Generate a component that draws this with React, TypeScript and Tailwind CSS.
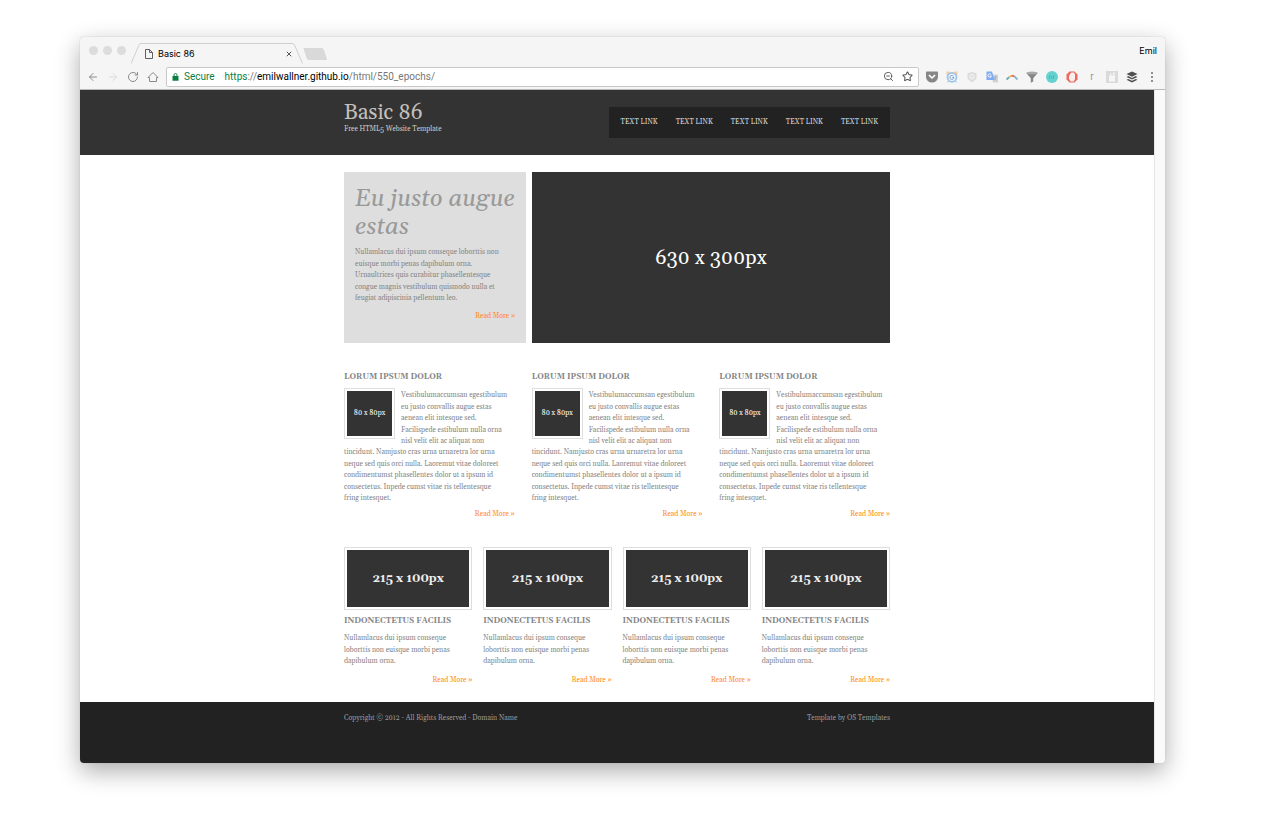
import React from "react";
import { ArrowLeft, ArrowRight, RotateCw, X, Star, ZoomOut } from "lucide-react";

const serif = "font-['Georgia','Gelasio','Liberation_Serif',serif]";

function Lines({ lines, className = "" }: { lines: string[]; className?: string }) {
  return (
    <p className={`flex flex-col justify-between ${className}`}>
      {lines.map((line) => (
        <span key={line} className="whitespace-nowrap leading-[11px]">{line}</span>
      ))}
    </p>
  );
}

function ReadMore() {
  return (
    <a href="#more" className="block text-right leading-[12px] text-[#ff8a14]">Read More »</a>
  );
}

const sideLines = [
  "Vestibulumaccumsan egestibulum",
  "eu justo convallis augue estas",
  "aenean elit intesque sed.",
  "Facilispede estibulum nulla orna",
  "nisl velit elit ac aliquat non",
];
const restLines = [
  "tincidunt. Namjusto cras urna urnaretra lor urna",
  "neque sed quis orci nulla. Laoremut vitae doloreet",
  "condimentumst phasellentes dolor ut a ipsum id",
  "consectetus. Inpede cumst vitae ris tellentesque",
  "fring intesquet.",
];

function Extensions() {
  return (
    <div className="flex items-center gap-2">
      <svg className="size-3" viewBox="0 0 12 12" aria-hidden="true">
        <path d="M1 .5h10a1 1 0 0 1 1 1V6a6 5.500 0 0 1-12 0V1.500a1 1 0 0 1 1-1z" fill="#868686" />
        <path d="M3.300 4.400 6 7l2.700-2.600" fill="none" stroke="#fff" strokeWidth="1.500" strokeLinecap="round" strokeLinejoin="round" />
      </svg>
      <svg className="size-3" viewBox="0 0 12 12" aria-hidden="true">
        <circle cx="2.300" cy="2.200" r="2" fill="#f7cf9c" />
        <circle cx="9.700" cy="2.200" r="2" fill="#f7cf9c" />
        <path d="M2.500 9.500 1.500 11.500M9.500 9.500l1 2" stroke="#9fc3ea" />
        <circle cx="6" cy="6.300" r="4.500" fill="#eef5fd" stroke="#9fc3ea" strokeWidth="1.800" />
        <path d="M7.500 5.200A2 2 0 1 0 7.900 6.500H6.300" fill="none" stroke="#7f9fc8" />
      </svg>
      <svg className="size-3" viewBox="0 0 12 12" aria-hidden="true">
        <path d="M6 1 10.500 2.300V6c0 2.500-2 4-4.500 5.300C3.500 10 1.500 8.500 1.500 6V2.300z" fill="#dcdcdc" />
        <circle cx="6" cy="5.700" r="2.300" fill="none" stroke="#f5f5f5" />
        <circle cx="6" cy="5.700" r=".8" fill="#f5f5f5" />
      </svg>
      <svg className="size-3" viewBox="0 0 12 12" aria-hidden="true">
        <path d="M5 3.500h7v8H7z" fill="#d5d5d5" />
        <path d="M7.500 6h3.500M9.200 5v1M10.500 6 8 9.500M8.300 7.500l2.200 2" stroke="#8aa7c9" strokeWidth=".7" fill="none" />
        <path d="M.5.500H6l2.500 8.500h-8z" fill="#7fadf3" />
        <path d="M5.200 3.700A1.700 1.700 0 1 0 5.400 5H4" fill="none" stroke="#fff" strokeWidth=".9" />
      </svg>
      <svg className="size-3" viewBox="0 0 12 12" aria-hidden="true" fill="none" strokeWidth="1.800">
        <path d="M.5 8.500 3 6.300" stroke="#6aa9b7" />
        <path d="M3 6.300 5.500 4.700" stroke="#eeb25e" />
        <path d="M5.500 4.700 8.500 5.400" stroke="#e0664f" />
        <path d="M8.500 5.400 11.500 8.500" stroke="#7fb5cc" />
      </svg>
      <svg className="size-3" viewBox="0 0 12 12" aria-hidden="true">
        <path d="M.3 2 4.800 7.300V11.700L7.200 10.500V7.300L11.700 2z" fill="#858585" />
        <ellipse cx="6" cy="2" rx="5.700" ry="1.500" fill="#a9a9a9" />
      </svg>
      <svg className="size-3" viewBox="0 0 12 12" aria-hidden="true">
        <circle cx="6" cy="6" r="6" fill="#64d2cf" />
        <path d="M3.500 8V4.500M3.500 5.500c1-1.200 2.300-1 2.300.3V8M7.500 8V4.500M7.500 5.300c.4-.7 1-.8 1.500-.6" fill="none" stroke="#45b3b2" strokeWidth=".8" />
      </svg>
      <svg className="size-3" viewBox="0 0 12 12" aria-hidden="true">
        <path d="M3.500.5h5L11.500 3.500v5l-3 3h-5l-3-3v-5z" fill="#ee6a5c" />
        <path d="M3 5.500 4 3l1.500-1.500H8l1 2v4.500L7.700 10.500h-3L3 8z" fill="#fbeeee" />
      </svg>
      <span className="w-3 text-center font-['Roboto',sans-serif] text-[10px] leading-3 text-[#999]">r</span>
      <svg className="size-3" viewBox="0 0 12 12" aria-hidden="true">
        <path d="M0 0h12v12H0z" fill="#dadada" />
        <path d="M3 5h6v5.500H3zM4 2.500h1.500V5H4zM7 1.500h1.500V5H7z" fill="#f5f5f5" />
      </svg>
      <svg className="size-3" viewBox="0 0 12 12" aria-hidden="true" fill="#505050">
        <path d="M6 .5 11.500 3.100 6 5.700.5 3.100z" />
        <path d="M.5 6 2.300 5.100 6 6.900l3.700-1.800 1.800.9L6 8.600z" />
        <path d="M.5 8.800 2.300 7.900 6 9.700l3.700-1.800 1.800.9L6 11.400z" />
      </svg>
      <svg className="size-3" viewBox="0 0 12 12" aria-hidden="true" fill="#777">
        <circle cx="6" cy="2" r="1.100" /><circle cx="6" cy="6" r="1.100" /><circle cx="6" cy="10" r="1.100" />
      </svg>
    </div>
  );
}

function BrowserBar() {
  return (
    <div className="border-b border-[#b9b7b9] bg-[#f5f5f5] font-['Inter',sans-serif]">
      <div className="flex h-[27px] items-end">
        <div className="flex items-center gap-[5px] self-center pl-[9px]">
          <span className="size-[9px] rounded-full bg-[#dcdcdc]" />
          <span className="size-[9px] rounded-full bg-[#dcdcdc]" />
          <span className="size-[9px] rounded-full bg-[#dcdcdc]" />
        </div>
        <div className="relative ml-[5px] flex h-[21px] w-[172px] items-center">
          <svg className="absolute inset-0 size-full" viewBox="0 0 172 21" preserveAspectRatio="none" aria-hidden="true">
            <path d="M0 20.500 8 2Q8.500.5 10 .5H161Q163 .5 163.500 2L171.500 20.500" fill="none" stroke="#cfcfcf" />
          </svg>
          <svg className="ml-[14px] h-[10px] w-2" viewBox="0 0 8 10" fill="none" stroke="#5f5f5f" aria-hidden="true">
            <path d="M.5.5H4.500L7.500 3.500V9.500H.5zM4.500.5V3.500H7.500" />
          </svg>
          <span className="ml-[5px] flex-1 text-[9px] leading-3 text-black">Basic 86</span>
          <button aria-label="Close tab" className="mr-[10px]"><X className="size-2 text-[#555]" strokeWidth={3} /></button>
        </div>
        <svg className="mb-1 h-3 w-6" viewBox="0 0 24 12" aria-hidden="true">
          <path d="M1 .5h17.500Q20 .5 20.500 2l3 9.500H6Q4.500 11.500 4 10z" fill="#d9d9d9" stroke="#cfcfcf" strokeWidth=".6" />
        </svg>
        <span className="ml-auto self-center pr-2 text-[9px] leading-3 text-black">Emil</span>
      </div>
      <div className="flex h-[25px] items-center pr-[7px] pl-[7px]">
        <div className="flex items-center gap-2 text-[#8a8a8a]">
          <button aria-label="Back"><ArrowLeft className="size-3" strokeWidth={2} /></button>
          <button aria-label="Forward" className="text-[#dadada]"><ArrowRight className="size-3" strokeWidth={2} /></button>
          <button aria-label="Reload"><RotateCw className="size-3" strokeWidth={2} /></button>
          <button aria-label="Home">
            <svg className="block size-3" viewBox="0 0 12 12" fill="none" stroke="currentColor" aria-hidden="true">
              <path d="M1 6.500 6 1.500l5 5H9.500v4h-7v-4z" strokeLinejoin="round" />
            </svg>
          </button>
        </div>
        <div className="ml-[7px] flex h-5 min-w-0 flex-1 items-center rounded-[2px] border border-[#c8c8c8] bg-white px-[5px] font-['Roboto',sans-serif] text-[10px] leading-3 text-[#0b8043]">
          <svg className="h-2 w-[7px]" viewBox="0 0 7 8" aria-hidden="true">
            <path d="M.5 3h6v4.800h-6z" fill="currentColor" />
            <path d="M2 3.200V2a1.500 1.500 0 0 1 3 0V3.200" fill="none" stroke="currentColor" strokeWidth=".9" />
          </svg>
          <span className="ml-[5px]">Secure</span>
          <span className="ml-[10px] flex-1 text-[#777]"><span className="text-[#0b8043]">https</span>://<span className="text-black">emilwallner.github.io</span>/html/550_epochs/</span>
          <ZoomOut className="size-[11px] text-[#555]" strokeWidth={2} />
          <Star className="ml-2 size-[11px] text-[#555]" strokeWidth={2.200} />
        </div>
        <div className="ml-[7px]"><Extensions /></div>
      </div>
    </div>
  );
}

export default function App() {
  return (
    <div className="bg-white pt-[37px] pr-[104px] pb-[52px] pl-20">
      <div className="overflow-hidden rounded-[4px] shadow-[0_0_1px_#999,0_8px_24px_#00000055]">
        <BrowserBar />
        <div className="flex">
          <div className={`min-w-0 flex-1 bg-white text-[7px] text-[#858585] ${serif}`}>
            <header className="bg-[#333]">
              <div className="mx-auto flex h-[65px] max-w-[546px] items-center justify-between">
                <div className="pb-[10px]">
                  <h1 className="text-[21px] leading-[22px] text-[#c3bfba]">Basic 86</h1>
                  <p className="leading-[10px] text-[#d0ccc8]">Free HTML5 Website Template</p>
                </div>
                <nav className="flex h-[31px] items-center gap-[18px] bg-[#222] px-3 text-[#d8d8d8]">
                  {[1, 2, 3, 4, 5].map((n) => (
                    <a key={n} href={`#link-${n}`}>TEXT LINK</a>
                  ))}
                </nav>
              </div>
            </header>
            <main className="mx-auto max-w-[546px] pt-[17px] pb-4">
              <section className="flex gap-[6px]">
                <div className="h-[171px] w-[182px] bg-[#dedede] px-[11px] pt-[13px]">
                  <h2 className="text-[24px] leading-[28px] whitespace-nowrap text-[#999] italic">Eu justo augue<br />estas</h2>
                  <Lines className="mt-[6px] h-[57px]" lines={[
                    "Nullamlacus dui ipsum conseque loborttis non",
                    "euisque morbi penas dapibulum orna.",
                    "Urnaultrices quis curabitur phasellentesque",
                    "congue magnis vestibulum quismodo nulla et",
                    "feugiat adipiscinia pellentum leo.",
                  ]} />
                  <div className="mt-[6px]"><ReadMore /></div>
                </div>
                <div className="flex flex-1 items-center justify-center bg-[#333] text-[20px] text-white">630 x 300px</div>
              </section>
              <section className="mt-7 grid grid-cols-3 gap-[17px]">
                {[1, 2, 3].map((n) => (
                  <article key={n}>
                    <h2 className="text-[8px] leading-[12px] font-bold">LORUM IPSUM DOLOR</h2>
                    <div className="mt-[5px] flex gap-[6px]">
                      <div className="size-[51px] shrink-0 border border-[#dedede] p-[2px]">
                        <div className="flex size-full items-center justify-center bg-[#333] text-white">80 x 80px</div>
                      </div>
                      <Lines className="mt-[2px] h-[57px]" lines={sideLines} />
                    </div>
                    <Lines className="h-[57px]" lines={restLines} />
                    <div className="mt-1"><ReadMore /></div>
                  </article>
                ))}
              </section>
              <section className="mt-[27px] grid grid-cols-4 gap-[11px]">
                {[1, 2, 3, 4].map((n) => (
                  <article key={n}>
                    <div className="h-[63px] border border-[#dedede] p-[2px]">
                      <div className="flex size-full items-center justify-center bg-[#333] text-[12px] font-bold text-[#eee]">215 x 100px</div>
                    </div>
                    <h2 className="mt-[5px] text-[8px] leading-[12px] font-bold">INDONECTETUS FACILIS</h2>
                    <Lines className="mt-[6px] h-[34px]" lines={["Nullamlacus dui ipsum conseque", "loborttis non euisque morbi penas", "dapibulum orna."]} />
                    <div className="mt-[7px]"><ReadMore /></div>
                  </article>
                ))}
              </section>
            </main>
            <footer className="bg-[#222] pt-[10px] pb-[39px]">
              <div className="mx-auto flex max-w-[546px] justify-between leading-[12px] text-[#999]">
                <p>Copyright © 2012 - All Rights Reserved - Domain Name</p>
                <p>Template by OS Templates</p>
              </div>
            </footer>
          </div>
          <div className="w-[11px] border-l border-[#e7e7e7] bg-[#fafafa]" />
        </div>
      </div>
    </div>
  );
}
